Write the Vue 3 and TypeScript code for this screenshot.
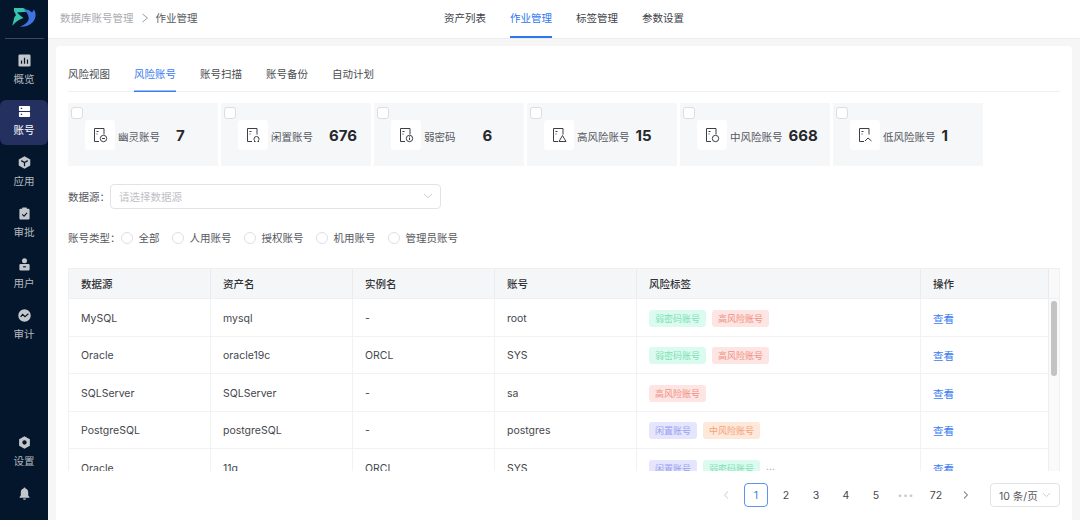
<script setup lang="ts">
const primary = ['风险视图', '风险账号', '账号扫描', '账号备份', '自动计划']
const stats = [
  { label: '幽灵账号', value: '7', cls: 'wide', mark: 'minus' },
  { label: '闲置账号', value: '676', cls: 'wide', mark: 'arch' },
  { label: '弱密码', value: '6', cls: 'weak', mark: 'info' },
  { label: '高风险账号', value: '15', cls: '', mark: 'tri' },
  { label: '中风险账号', value: '668', cls: '', mark: 'circle' },
  { label: '低风险账号', value: '1', cls: '', mark: 'caret' },
]
const types = ['全部', '人用账号', '授权账号', '机用账号', '管理员账号']
const rows = [
  { src: 'MySQL', asset: 'mysql', inst: '-', acct: 'root', tags: [['弱密码账号', 'g'], ['高风险账号', 'r']], more: false },
  { src: 'Oracle', asset: 'oracle19c', inst: 'ORCL', acct: 'SYS', tags: [['弱密码账号', 'g'], ['高风险账号', 'r']], more: false },
  { src: 'SQLServer', asset: 'SQLServer', inst: '-', acct: 'sa', tags: [['高风险账号', 'r']], more: false },
  { src: 'PostgreSQL', asset: 'postgreSQL', inst: '-', acct: 'postgres', tags: [['闲置账号', 'v'], ['中风险账号', 'o']], more: false },
  { src: 'Oracle', asset: '11g', inst: 'ORCL', acct: 'SYS', tags: [['闲置账号', 'v'], ['弱密码账号', 'g']], more: true },
]
const topNav = ['资产列表', '作业管理', '标签管理', '参数设置']
const pages = ['2', '3', '4', '5']
</script>

<template>
  <div class="app">
    <aside class="side">
      <div class="logo">
        <svg width="24" height="20" viewBox="0 0 24 20">
          <path d="M2 1H10.500C12.500 1 14 2.500 14.500 4.800L5 5.500L8.500 8.800L11.500 11C8 12 4.500 14 .2 19L2.500 10L4 8L2 4z" fill="#36c6ae" />
          <path d="M11.500 2C15 2.500 18 3 20 5.500C20.700 4.500 21 4 22 2.500C24.500 7 24 11 21 15C17.500 18.500 13 20 8 19.800C11.500 18 14.500 16.500 16 14C18 10.500 15.500 5.500 11.500 2z" fill="#3f74e0" />
        </svg>
      </div>
      <div class="side-rule"></div>
      <nav class="side-list">
        <a class="side-item">
          <svg width="13" height="13" viewBox="0 0 14 14"><rect x="0.500" y="0.500" width="13" height="13" rx="1.500" fill="#c3c7cc" /><path d="M3.800 7v3.500M7 4v6.500M10.200 6v4.500" stroke="#03162c" stroke-width="1.300" /></svg>
          <span>概览</span>
        </a>
        <a class="side-item on">
          <svg width="13" height="13" viewBox="0 0 14 14"><rect x="1" y="1" width="12" height="5.500" rx=".8" fill="#fff" /><rect x="1" y="7.500" width="12" height="5.500" rx=".8" fill="#fff" /><path d="M3 3.700h1.500M3 10.200h1.500" stroke="#24305f" stroke-width="1.300" /></svg>
          <span>账号</span>
        </a>
        <a class="side-item">
          <svg width="13" height="13" viewBox="0 0 14 14"><path d="M7 .3l6.200 3.400v6.600L7 13.700.8 10.300V3.700z" fill="#c3c7cc" /><path d="M3.500 5L7 7l3.500-2M7 7v4" stroke="#03162c" stroke-width="1.300" fill="none" /></svg>
          <span>应用</span>
        </a>
        <a class="side-item">
          <svg width="13" height="13" viewBox="0 0 14 14"><rect x="1.500" y="2" width="11" height="11.500" rx="1.200" fill="#c3c7cc" /><rect x="4.500" y=".5" width="5" height="2.500" rx=".6" fill="#c3c7cc" /><path d="M4.500 8l2 1.800L9.700 6.300" stroke="#03162c" stroke-width="1.200" fill="none" /></svg>
          <span>审批</span>
        </a>
        <a class="side-item">
          <svg width="13" height="13" viewBox="0 0 14 14"><circle cx="7" cy="3" r="2.700" fill="#c3c7cc" /><rect x="1.500" y="6.500" width="11" height="7" rx="1.200" fill="#c3c7cc" /><path d="M5.500 9.500h3" stroke="#03162c" stroke-width="1.300" /></svg>
          <span>用户</span>
        </a>
        <a class="side-item">
          <svg width="13" height="13" viewBox="0 0 14 14"><circle cx="7" cy="7" r="6.700" fill="#c3c7cc" /><path d="M2.800 8.500L5 5.800l2.500 2.400 3.700-3" stroke="#03162c" stroke-width="1.300" fill="none" /></svg>
          <span>审计</span>
        </a>
      </nav>
      <div class="side-foot">
        <a class="side-item">
          <svg width="13" height="13" viewBox="0 0 14 14"><path d="M7 .3l5.800 3.300v6.800L7 13.700 1.200 10.400V3.600z" fill="#c3c7cc" /><circle cx="7" cy="7" r="2.300" fill="#03162c" /></svg>
          <span>设置</span>
        </a>
        <svg class="bell" width="13" height="13" viewBox="0 0 14 14"><path d="M7 .6c.7 0 1 .4 1 1 2 .5 3 2.200 3 4.200v3.400l1.300 1.700v.6H1.700v-.6L3 9.200V5.800c0-2 1-3.700 3-4.200 0-.6.300-1 1-1z" fill="#c3c7cc" /><path d="M5.500 12.500h3v.4c0 .4-.6.800-1.500.8s-1.500-.4-1.500-.8z" fill="#c3c7cc" /></svg>
      </div>
    </aside>

    <div class="body">
      <header class="top">
        <div class="crumb">
          <span class="crumb-a">数据库账号管理</span>
          <svg width="8" height="10" viewBox="0 0 8 10"><path d="M1.500 1l5 4-5 4" stroke="#9a9ca2" fill="none" /></svg>
          <span class="crumb-b">作业管理</span>
        </div>
        <nav class="top-nav">
          <a v-for="(n, i) in topNav" :key="n" :class="['top-link', { on: i === 1 }]">{{ n }}</a>
        </nav>
      </header>

      <main class="main">
        <section class="card">
          <div class="tabs">
            <a v-for="(t, i) in primary" :key="t" :class="['tab', { on: i === 1 }]">{{ t }}</a>
          </div>

          <div class="stats">
            <div v-for="s in stats" :key="s.label" class="stat">
              <span class="check"></span>
              <span class="ico">
                <svg width="15" height="16" viewBox="0 0 15 16" fill="none" stroke="#3c3f45" stroke-width="1">
                  <path d="M6 14.500H1.500v-13h9.500v6" />
                  <path d="M3.500 4.500h2M3.500 7h1" />
                  <template v-if="s.mark === 'minus'"><circle cx="10.500" cy="11.500" r="3.200" /><path d="M9 11.500h3" /></template>
                  <template v-else-if="s.mark === 'arch'"><path d="M8 14.500h1.300c-1-1-1.300-1.700-1.300-2.500a2.500 2.500 0 0 1 5 0c0 .8-.3 1.500-1.300 2.500H13" /></template>
                  <template v-else-if="s.mark === 'info'"><circle cx="10.500" cy="11.500" r="3.200" /><path d="M10.500 10.500v2.500M10.500 9.400v.6" /></template>
                  <template v-else-if="s.mark === 'tri'"><path d="M10.500 8.500l3.500 6H7z" /></template>
                  <template v-else-if="s.mark === 'circle'"><circle cx="10.500" cy="11.500" r="3.200" /></template>
                  <template v-else><path d="M7 14l3-3 3.500 3" /></template>
                </svg>
              </span>
              <span class="stat-label">{{ s.label }}</span>
              <b :class="['stat-num', s.cls]">{{ s.value }}</b>
            </div>
          </div>

          <div class="source-row">
            <label class="field">数据源：</label>
            <div class="select">
              <span>请选择数据源</span>
              <svg width="10" height="6" viewBox="0 0 10 6"><path d="M1 .8l4 4 4-4" stroke="#c5c7cc" fill="none" /></svg>
            </div>
          </div>

          <div class="type-row">
            <label class="field">账号类型：</label>
            <span v-for="t in types" :key="t" class="radio"><i></i>{{ t }}</span>
          </div>

          <div class="table">
            <div class="thead">
              <div class="tr">
                <div class="c c1">数据源</div>
                <div class="c c2">资产名</div>
                <div class="c c3">实例名</div>
                <div class="c c4">账号</div>
                <div class="c c5">风险标签</div>
                <div class="c c6">操作</div>
              </div>
              <div class="gutter"></div>
            </div>
            <div class="tbody">
              <div class="rows">
                <div v-for="(r, i) in rows" :key="i" class="tr">
                  <div class="c c1">{{ r.src }}</div>
                  <div class="c c2">{{ r.asset }}</div>
                  <div class="c c3">{{ r.inst }}</div>
                  <div class="c c4">{{ r.acct }}</div>
                  <div class="c c5">
                    <span v-for="tag in r.tags" :key="tag[0]" :class="['tag', tag[1]]">{{ tag[0] }}</span>
                    <span v-if="r.more" class="more">...</span>
                  </div>
                  <div class="c c6"><a class="link">查看</a></div>
                </div>
              </div>
              <div class="scroll"><div class="thumb"></div></div>
            </div>
          </div>

          <div class="pager">
            <svg class="pg-arrow" width="6" height="8" viewBox="0 0 6 8"><path d="M5 .6L1.500 4 5 7.400" stroke="#c5c7cc" fill="none" /></svg>
            <span class="pg cur">1</span>
            <span v-for="p in pages" :key="p" class="pg">{{ p }}</span>
            <span class="pg dots">•••</span>
            <span class="pg">72</span>
            <svg class="pg-arrow" width="6" height="8" viewBox="0 0 6 8"><path d="M1 .6L4.500 4 1 7.400" stroke="#4a4d52" fill="none" /></svg>
            <div class="size">
              <span>10 条/页</span>
              <svg width="9" height="6" viewBox="0 0 10 6"><path d="M1 .8l4 4 4-4" stroke="#c5c7cc" fill="none" /></svg>
            </div>
          </div>
        </section>
      </main>
    </div>
  </div>
</template>

<style>
html, body { margin: 0; padding: 0; overflow: hidden; }
</style>

<style scoped>
.app {
  width: 1080px;
  height: 520px;
  display: flex;
  overflow: hidden;
  font-family: "Inter", "Noto Sans CJK SC", sans-serif;
  font-size: 10.5px;
  color: #44474d;
  background: #f6f6f7;
}
a { text-decoration: none; color: inherit; }

.side {
  width: 48px;
  flex: none;
  background: #03162c;
  display: flex;
  flex-direction: column;
  align-items: center;
}
.logo { height: 38px; display: flex; align-items: center; justify-content: center; padding-bottom: 4px; box-sizing: border-box; }
.side-rule { width: 39px; height: 1px; background: #3a4858; }
.side-list { display: flex; flex-direction: column; width: 48px; padding-top: 10px; gap: 6px; }
.side-item {
  height: 45px;
  width: 48px;
  box-sizing: border-box;
  padding-bottom: 2px;
  display: flex;
  flex-direction: column;
  align-items: center;
  justify-content: center;
  gap: 5px;
  color: #b4b9bf;
  line-height: 16px;
  border-radius: 6px;
}
.side-item.on { background: #24305f; color: #fff; }
.side-foot { margin-top: auto; display: flex; flex-direction: column; align-items: center; padding-bottom: 20px; }
.bell { margin-top: 11px; }

.body { flex: 1; display: flex; flex-direction: column; min-width: 0; }
.top {
  height: 39px;
  flex: none;
  box-sizing: border-box;
  background: #fff;
  border-bottom: 1px solid #ececee;
  display: grid;
  grid-template-columns: 1fr auto 1fr;
  align-items: stretch;
}
.crumb { display: flex; align-items: center; gap: 7px; padding: 0 0 3px 12px; }
.crumb-a { color: #a9abb0; }
.crumb-b { color: #55585e; }
.top-nav { display: flex; gap: 24px; }
.top-link { display: flex; align-items: center; height: 38px; box-sizing: border-box; padding-bottom: 4px; color: #3e4147; }
.top-link.on { color: #2f75f0; box-shadow: inset 0 -2px 0 #2f75f0; }

.main { flex: 1; padding: 7px 8px 0; min-height: 0; display: flex; }
.card {
  flex: 1;
  background: #fff;
  border-radius: 4px 4px 0 0;
  padding: 0 12px;
  min-width: 0;
  display: flex;
  flex-direction: column;
}
.tabs {
  height: 46px;
  flex: none;
  display: flex;
  gap: 24px;
  box-sizing: border-box;
  border-bottom: 1px solid #f0f0f2;
  padding-top: 12px;
}
.tab { display: flex; align-items: center; height: 34px; box-sizing: border-box; padding-bottom: 4px; color: #4a4d52; }
.tab.on { color: #3b7cf2; box-shadow: inset 0 -1.500px 0 #3b7cf2; }

.stats { display: flex; gap: 3px; margin-top: 11px; }
.stat {
  width: 150px;
  height: 63px;
  box-sizing: border-box;
  background: #f6f7f9;
  display: flex;
  align-items: center;
  padding: 0 0 0 17px;
  position: relative;
}
.check {
  position: absolute;
  left: 3px;
  top: 4px;
  width: 12px;
  height: 12px;
  box-sizing: border-box;
  background: #fff;
  border: 1px solid #dcdde1;
  border-radius: 3px;
}
.ico {
  width: 30px;
  height: 30px;
  background: #fff;
  border-radius: 3px;
  display: flex;
  align-items: center;
  justify-content: center;
  margin-right: 3px;
}
.stat-label { color: #55585e; white-space: nowrap; padding-top: 4px; }
.stat-num {
  font-size: 15px;
  font-weight: 700;
  color: #26282c;
  margin-left: 6px;
  line-height: 1;
  padding-top: 2px;
}
.stat-num.wide { margin-left: 16px; }
.stat-num.weak { margin-left: 27px; }

.field { color: #55585e; white-space: nowrap; }
.source-row { display: flex; align-items: center; margin-top: 18px; height: 25px; }
.select {
  width: 331px;
  height: 25px;
  box-sizing: border-box;
  border: 1px solid #e2e3e6;
  border-radius: 4px;
  padding: 0 7px 1px 8px;
  display: flex;
  align-items: center;
  justify-content: space-between;
  color: #bfc1c6;
}
.type-row { display: flex; align-items: center; margin-top: 16px; height: 25px; gap: 12px; }
.type-row .field { margin-right: -12px; }
.radio { display: flex; align-items: center; gap: 6px; color: #55585e; white-space: nowrap; }
.radio i {
  width: 12px;
  height: 12px;
  box-sizing: border-box;
  border: 1px solid #dfe0e3;
  border-radius: 50%;
  background: #fff;
}

.table {
  margin-top: 18px;
  height: 203px;
  flex: none;
  box-sizing: border-box;
  border: 1px solid #f0f0f2;
  border-bottom: 0;
  overflow: hidden;
}
.thead { display: flex; height: 30px; box-sizing: border-box; background: #f5f6f8; border-bottom: 1px solid #f0f0f2; }
.thead .tr { flex: none; font-weight: 500; color: #303236; }
.thead .c { border-color: #eaebee; }
.gutter { flex: 1; background: #f9f9fa; }
.tr { display: flex; }
.tbody { display: flex; height: 172px; overflow: hidden; }
.rows { width: 980px; flex: none; }
.rows .tr { height: 37.500px; box-sizing: border-box; border-bottom: 1px solid #f2f2f4; }
.rows .c { padding-top: 2px; }
.c {
  box-sizing: border-box;
  padding-left: 12px;
  display: flex;
  align-items: center;
  border-right: 1px solid #f2f2f4;
  white-space: nowrap;
}
.c1, .c2, .c3, .c4 { width: 142px; }
.c5 { width: 284px; gap: 6px; }
.c6 { width: 128px; }
.thead .c6 { border-right: 1px solid #eaebee; }
.rows .c6 { border-right: 1px solid #eceef0; }
.tag {
  display: inline-block;
  height: 17px;
  line-height: 17px;
  padding: 0 6px;
  border-radius: 3px;
  font-size: 9px;
}
.tag.g { background: #dcfbf0; color: #7edfb4; }
.tag.r { background: #fde5e4; color: #f0907f; }
.tag.v { background: #e5e6fd; color: #9a9fee; }
.tag.o { background: #fde8d9; color: #f3a27a; }
.more { color: #a9abb0; align-self: flex-end; line-height: 13px; padding-bottom: 13px; }
.link { color: #3b7cf2; }
.scroll { flex: 1; background: #fafafb; padding: 2px 2px 0; box-sizing: border-box; }
.thumb { width: 6px; height: 75px; background: #c3c3c3; border-radius: 3px; }

.pager {
  display: flex;
  align-items: center;
  justify-content: flex-end;
  margin-top: 12px;
  height: 24px;
  color: #44474d;
}
.pg {
  width: 24px;
  height: 24px;
  margin-right: 6px;
  box-sizing: border-box;
  display: flex;
  align-items: center;
  justify-content: center;
}
.pg.cur { border: 1px solid #5b93f5; border-radius: 4px; color: #3b7cf2; }
.dots { color: #c5c7cc; font-size: 8px; letter-spacing: 1px; }
.pg-arrow { width: 6px; margin: 0 15px 0 0; }
.pager .pg + .pg-arrow { margin: 0 21px 0 9px; }
.size {
  width: 70px;
  height: 24px;
  box-sizing: border-box;
  border: 1px solid #e2e3e6;
  border-radius: 4px;
  padding: 0 8px;
  display: flex;
  align-items: center;
  justify-content: space-between;
  color: #55585e;
}
</style>
